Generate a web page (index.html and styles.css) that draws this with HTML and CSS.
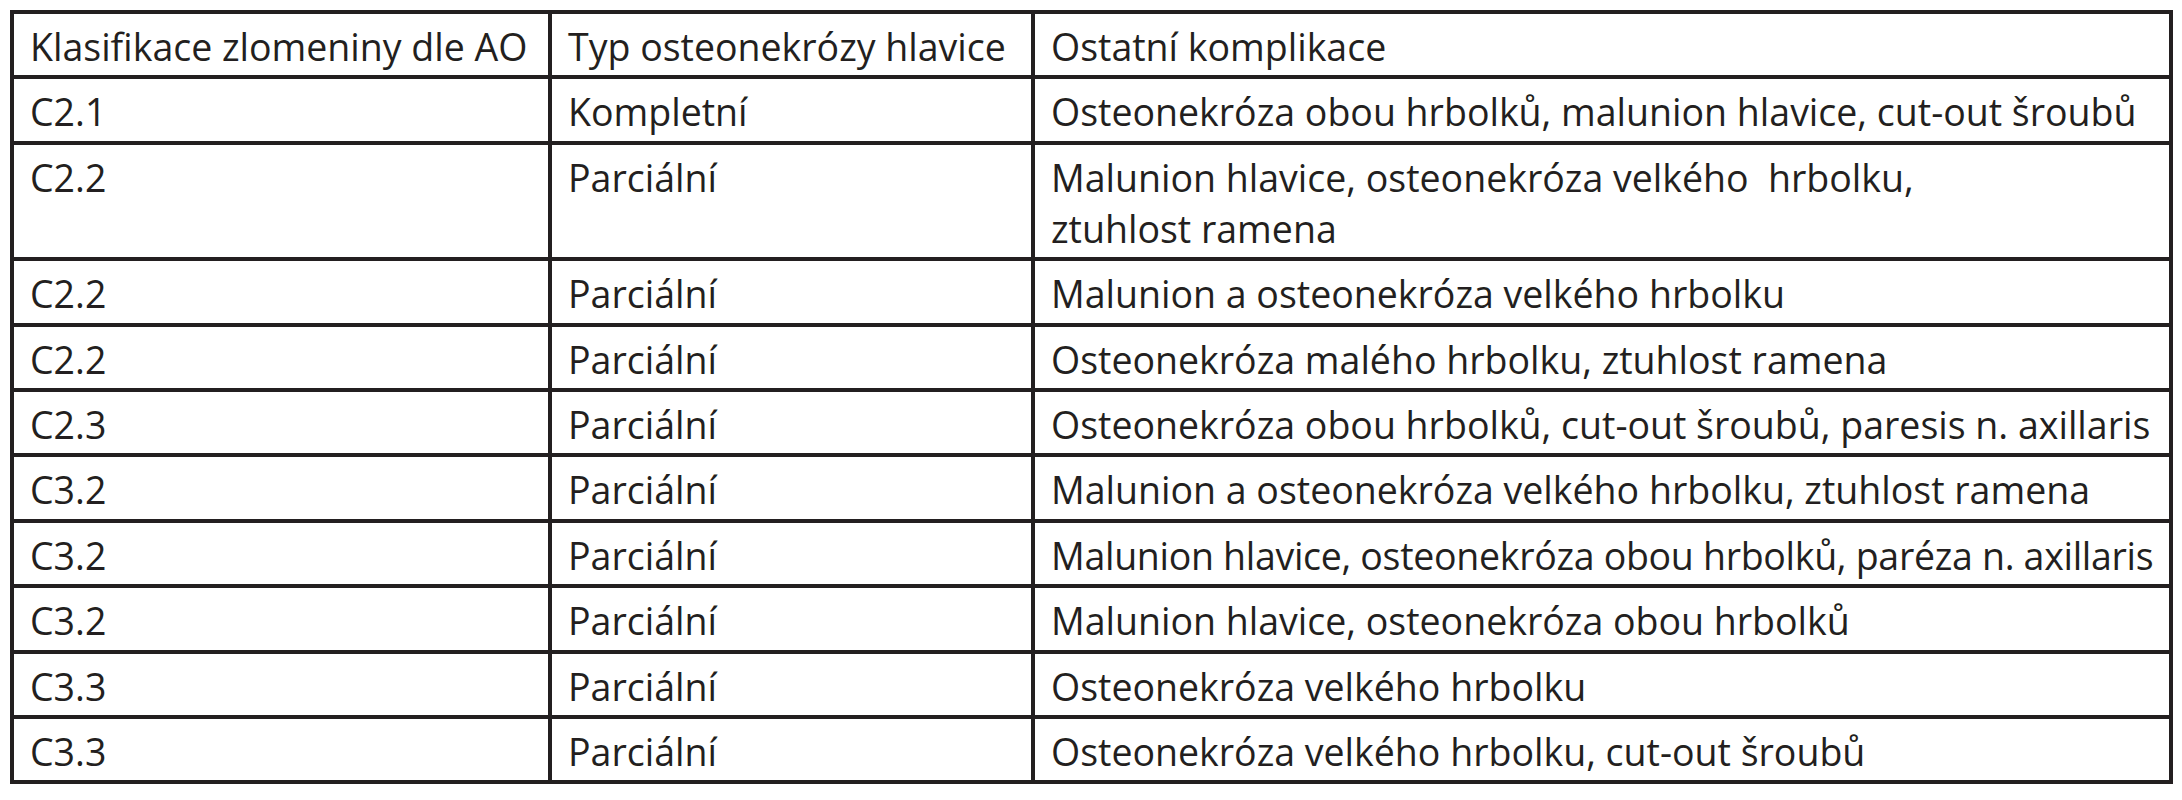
FILE: index.html
```html
<!DOCTYPE html>
<html lang="cs">
<head>
<meta charset="utf-8">
<title>Tabulka komplikací</title>
<link rel="stylesheet" href="styles.css">
</head>
<body>
<table class="data">
  <colgroup>
    <col class="c1">
    <col class="c2">
    <col class="c3">
  </colgroup>
  <tbody>
    <tr><td>Klasifikace zlomeniny dle AO</td><td>Typ osteonekrózy hlavice</td><td>Ostatní komplikace</td></tr>
    <tr><td>C2.1</td><td>Kompletní</td><td>Osteonekróza obou hrbolků, malunion hlavice, cut-out šroubů</td></tr>
    <tr><td>C2.2</td><td>Parciální</td><td>Malunion hlavice, osteonekróza velkého&nbsp; hrbolku,<br>ztuhlost ramena</td></tr>
    <tr><td>C2.2</td><td>Parciální</td><td>Malunion a osteonekróza velkého hrbolku</td></tr>
    <tr><td>C2.2</td><td>Parciální</td><td>Osteonekróza malého hrbolku, ztuhlost ramena</td></tr>
    <tr><td>C2.3</td><td>Parciální</td><td>Osteonekróza obou hrbolků, cut-out šroubů, paresis n. axillaris</td></tr>
    <tr><td>C3.2</td><td>Parciální</td><td>Malunion a osteonekróza velkého hrbolku, ztuhlost ramena</td></tr>
    <tr><td>C3.2</td><td>Parciální</td><td class="tight">Malunion hlavice, osteonekróza obou hrbolků, paréza n. axillaris</td></tr>
    <tr><td>C3.2</td><td>Parciální</td><td>Malunion hlavice, osteonekróza obou hrbolků</td></tr>
    <tr><td>C3.3</td><td>Parciální</td><td>Osteonekróza velkého hrbolku</td></tr>
    <tr><td>C3.3</td><td>Parciální</td><td>Osteonekróza velkého hrbolku, cut-out šroubů</td></tr>
  </tbody>
</table>
</body>
</html>
```
FILE: styles.css
```css
html, body {
  margin: 0;
  padding: 0;
  background: #ffffff;
}
body {
  padding: 10px 0 0 10px;
  font-family: "Open Sans", "Noto Sans", sans-serif;
  color: #231f20;
}
.data {
  border-collapse: collapse;
  table-layout: fixed;
  width: 2159px;
}
.data col.c1 { width: 538px; }
.data col.c2 { width: 483px; }
.data col.c3 { width: 1138px; }
.data td {
  border: 4px solid #231f20;
  padding: 7px 12px 3.4px 16px;
  font-size: 37.5px;
  line-height: 51px;
  vertical-align: top;
  white-space: nowrap;
  overflow: hidden;
}
.data td.tight {
  letter-spacing: -0.3px;
}
```
